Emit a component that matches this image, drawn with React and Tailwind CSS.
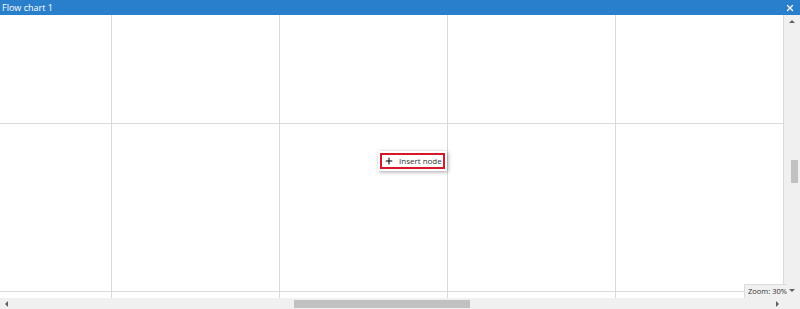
import { X, Plus } from "lucide-react";

const V_LINES = [111, 279, 447, 615, 783];
const H_LINES = [108, 276];

function Arrow({ dir }) {
  const pts = {
    up: "0,4 3,1 6,4",
    down: "0,1 3,4 6,1",
    left: "4,0 1,3 4,6",
    right: "1,0 4,3 1,6",
  }[dir];
  return (
    <svg width="6" height="6" viewBox="0 0 6 6">
      <polygon points={pts} fill="#606060" />
    </svg>
  );
}

export default function App() {
  return (
    <div
      className="relative w-[800px] h-[309px] flex flex-col bg-white overflow-hidden"
      style={{ fontFamily: '"Segoe UI", "Open Sans", "Liberation Sans", sans-serif' }}
    >
      {/* title bar */}
      <div className="h-[15px] bg-[#2a7fcd] flex items-center justify-between pl-[2px] pr-[5px] text-white">
        <span className="text-[9px] leading-none">Flow chart 1</span>
        <X className="w-[10px] h-[10px]" strokeWidth={3} />
      </div>

      <div className="flex flex-1 min-h-0">
        {/* canvas */}
        <div className="relative flex-1 overflow-hidden">
          <svg className="absolute inset-0" width="784" height="283">
            {V_LINES.map((x) => (
              <line key={x} x1={x + 0.5} y1="0" x2={x + 0.5} y2="283" stroke="#dadada" />
            ))}
            {H_LINES.map((y) => (
              <line key={y} x1="0" y1={y + 0.5} x2="784" y2={y + 0.5} stroke="#dadada" />
            ))}
          </svg>

          {/* context menu */}
          <div className="absolute left-[378px] top-[136px] w-[69px] h-[20px] bg-white p-[2px] shadow-[1px_1px_4px_rgba(0,0,0,0.35)]">
            <div className="h-full border-2 border-[#d7182a] flex items-center pl-[2px] gap-[5px] whitespace-nowrap">
              <Plus className="w-[10px] h-[10px] shrink-0 text-black" strokeWidth={2.5} />
              <span className="text-[8px] leading-none text-[#333]">Insert node</span>
            </div>
          </div>
        </div>

        {/* vertical scrollbar */}
        <div className="w-[16px] bg-[#f0f0f0] flex flex-col items-center">
          <div className="h-[14px] flex items-center justify-center">
            <Arrow dir="up" />
          </div>
          <div className="flex-1 w-full relative">
            <div className="absolute left-[7px] top-[131px] w-[7px] h-[23px] bg-[#c1c1c1]" />
          </div>
          <div className="h-[14px] flex items-center justify-center">
            <Arrow dir="down" />
          </div>
        </div>
      </div>

      {/* horizontal scrollbar */}
      <div className="h-[11px] bg-[#f0f0f0] flex items-center">
        <div className="w-[14px] flex justify-center">
          <Arrow dir="left" />
        </div>
        <div className="flex-1 h-full relative">
          <div className="absolute left-[280px] top-[2px] w-[176px] h-[8px] bg-[#c1c1c1]" />
        </div>
        <div className="w-[16px] flex justify-center">
          <Arrow dir="right" />
        </div>
        <div className="w-[14px]" />
      </div>

      {/* zoom label */}
      <div className="absolute left-[744px] top-[284px] w-[43px] h-[14px] bg-[#f0f0f0] border-l border-t border-[#dcdcdc] flex items-center pl-[3px] whitespace-nowrap overflow-hidden">
        <span className="text-[7.5px] leading-none text-[#333]">Zoom: 30%</span>
      </div>
    </div>
  );
}
